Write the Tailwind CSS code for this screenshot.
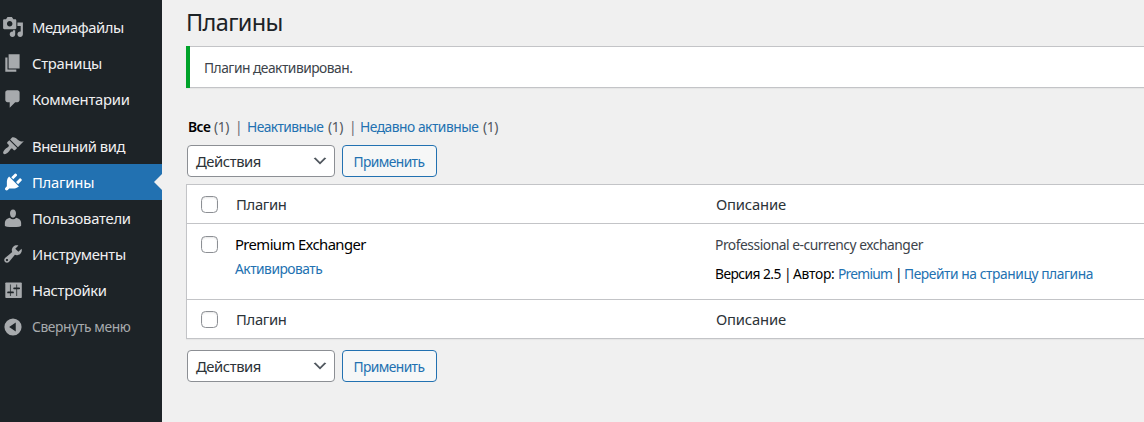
<!DOCTYPE html>
<html lang="ru">
<head>
<meta charset="utf-8">
<title>Плагины</title>
<script src="https://cdn.jsdelivr.net/npm/@tailwindcss/browser@4"></script>
</head>
<body class="flex h-[422px] w-[1144px] overflow-hidden bg-[#f0f0f0] font-['Noto_Sans','Open_Sans',sans-serif] text-[13.8px] text-[#3c434a] whitespace-nowrap">
<nav class="flex w-[162px] shrink-0 flex-col bg-[#1d2327] pt-[9px] text-[14.8px] text-[#f0f0f1]">
  <a class="flex h-9 items-center pl-0.5"><svg class="mr-2 size-[22px] fill-[#a7aaad]" viewBox="0 0 20 20"><path fill-rule="evenodd" d="M13 11V4c0-.55-.45-1-1-1h-1.670L9 1H5L3.670 3H2c-.55 0-1 .45-1 1v7c0 .55.45 1 1 1h10c.55 0 1-.45 1-1zM7 4.500c1.380 0 2.500 1.120 2.500 2.500S8.380 9.500 7 9.500 4.500 8.380 4.500 7 5.620 4.500 7 4.500zM14 6h5v10.500c0 1.380-1.120 2.500-2.500 2.500S14 17.880 14 16.500s1.120-2.500 2.500-2.500c.17 0 .34.020.5.050V9h-3V6zm-4 8.050V13h2v3.500c0 1.380-1.120 2.500-2.500 2.500S7 17.880 7 16.500 8.120 14 9.500 14c.17 0 .34.020.5.050z"/></svg><span class="tracking-[-0.43px]">Медиафайлы</span></a>
  <a class="flex h-9 items-center pl-0.5"><svg class="mr-2 size-[22px] fill-[#a7aaad]" viewBox="0 0 20 20"><path d="M6 15V2h10v13H6zm-1 1h8v2H3V5h2v11z"/></svg><span class="tracking-[-0.27px]">Страницы</span></a>
  <a class="flex h-9 items-center pl-0.5"><svg class="mr-2 size-[22px] fill-[#a7aaad]" viewBox="0 0 20 20"><path d="M5 2h9c1.100 0 2 .9 2 2v7c0 1.100-.9 2-2 2h-2l-5 5v-5H5c-1.100 0-2-.9-2-2V4c0-1.100.9-2 2-2z"/></svg><span class="tracking-[-0.22px]">Комментарии</span></a>
  <a class="mt-[11px] flex h-9 items-center pl-0.5"><svg class="mr-2 size-[22px] fill-[#a7aaad]" viewBox="0 0 20 20"><path d="M14.480 11.060L7.410 3.990l1.500-1.500c.5-.56 2.300-.47 3.510.32 1.210.8 1.430 1.280 2.910 2.100 1.180.64 2.450 1.260 4.450.85zm-.71.71L6.700 4.700 4.930 6.470c-.39.39-.39 1.020 0 1.410l1.060 1.060c.39.39.39 1.030 0 1.420-.6.6-1.430 1.110-2.210 1.690-.35.26-.7.53-1.010.84C1.430 14.230.4 16.080 1.400 17.070c.99 1 2.840-.03 4.180-1.360.31-.31.58-.66.85-1.020.57-.78 1.080-1.610 1.690-2.210.39-.39 1.020-.39 1.410 0l1.060 1.060c.39.39 1.020.39 1.410 0z"/></svg><span class="tracking-[-0.45px]">Внешний вид</span></a>
  <a class="relative flex h-9 items-center bg-[#2271b1] pl-0.5 text-white"><svg class="mr-2 size-[22px] fill-white" viewBox="-0.4 0 20 20"><path d="M13.110 4.360L9.870 7.600 8 5.730l3.240-3.240c.35-.34 1.050-.2 1.560.32.52.51.66 1.210.31 1.550zm-8 1.770l.91-1.120 9.010 9.010-1.190.84c-.71.71-2.630 1.160-3.820 1.160H6.140L4.900 17.260c-.59.59-1.540.59-2.120 0-.59-.58-.59-1.530 0-2.120l1.240-1.240v-3.880c0-1.130.4-3.190 1.090-3.890zm7.260 3.970l3.240-3.240c.34-.35 1.040-.21 1.550.31.52.51.66 1.210.31 1.550l-3.240 3.250z"/></svg><span class="tracking-[-0.23px]">Плагины</span><svg class="absolute top-2.5 right-0 h-4 w-2 fill-[#f0f0f0]" viewBox="0 0 8 16"><path d="M8 0v16L0 8z"/></svg></a>
  <a class="flex h-9 items-center pl-0.5"><svg class="mr-2 size-[22px] fill-[#a7aaad]" viewBox="0 0 20 20"><path d="M10 9.700C8 9.700 7.350 7.200 7.300 5.900 7.200 3.900 8.200 2.300 10 2.300s2.800 1.600 2.700 3.600C12.650 7.200 12 9.700 10 9.700zM7.100 9.700Q8.400 11.100 10 11.100T12.900 9.700C15.500 10.200 17.400 12.100 17.400 14.400v2.700Q17.300 18.200 10 18.200T2.600 17.100v-2.700C2.600 12.100 4.500 10.200 7.100 9.700z"/></svg><span class="tracking-[-0.23px]">Пользователи</span></a>
  <a class="flex h-9 items-center pl-0.5"><svg class="mr-2 size-[22px] fill-[#a7aaad]" viewBox="0 0 20 20"><path fill-rule="evenodd" d="M16.680 9.770c-1.340 1.340-3.300 1.670-4.950.99l-5.410 6.520c-.99.99-2.590.99-3.580 0s-.99-2.590 0-3.570l6.520-5.420c-.68-1.650-.35-3.610.99-4.950 1.280-1.280 3.120-1.620 4.720-1.060l-2.890 2.890 2.820 2.820 2.860-2.870c.53 1.580.18 3.390-1.080 4.650zM3.810 16.210c.4.39 1.040.39 1.430 0 .4-.4.4-1.040 0-1.430-.39-.4-1.030-.4-1.430 0-.39.39-.39 1.030 0 1.430z"/></svg><span class="tracking-[-0.31px]">Инструменты</span></a>
  <a class="flex h-9 items-center pl-0.5"><svg class="mr-2 size-[22px] fill-[#a7aaad]" viewBox="0 0 20 20"><rect x="3" y="3.200" width="15" height="14" rx=".7"/><path d="M7.700 5v10.500M13.300 5v10.500" fill="none" stroke="#1d2327" stroke-opacity=".7" stroke-width="1"/><path d="M5.500 12.200h4.500M11 8.500h4.600" fill="none" stroke="#1d2327" stroke-width="1.600" stroke-linecap="round"/></svg><span class="tracking-[-0.3px]">Настройки</span></a>
  <a class="mt-px flex h-9 items-center pl-0.5 text-[13.8px] text-[#a7aaad]"><svg class="mr-2 size-[22px] fill-[#a7aaad]" viewBox="0 0 20 20"><path fill-rule="evenodd" d="M10 2.200a7.800 7.800 0 1 0 0 15.600 7.800 7.800 0 0 0 0-15.600zM12.500 6v8L6.500 10z"/></svg><span class="tracking-[-0.37px]">Свернуть меню</span></a>
</nav>
<main class="flex min-w-0 flex-1 flex-col pl-6">
  <h1 class="h-[46px] pt-[7px] text-[23.5px] leading-[30px] tracking-[-0.63px] text-[#1d2327]">Плагины</h1>
  <div class="flex h-[42px] shrink-0 border-y border-[#c3c4c7] bg-white shadow-[0_1px_1px_rgba(0,0,0,0.04)]"><div class="-my-px w-1 bg-[#00a32a]"></div><p class="self-center pl-3.5 pt-0.5 tracking-[-0.51px]">Плагин деактивирован.</p></div>
  <div class="mt-[29px] flex h-5 items-center pl-0.5 leading-5 text-[#50575e]">
    <b class="w-[26px] font-semibold tracking-[-0.5px] text-black">Все</b><span class="w-[21px] tracking-[-0.4px]">(1)</span><span class="w-3 text-[#646970]">|</span><a class="w-[81px] tracking-[-0.6px] text-[#2271b1]">Неактивные</a><span class="w-[21px] tracking-[-0.4px]">(1)</span><span class="w-[11px] text-[#646970]">|</span><a class="w-[123px] tracking-[-0.49px] text-[#2271b1]">Недавно активные</a><span class="tracking-[-0.4px]">(1)</span>
  </div>
  <div class="mt-2 flex h-8 gap-[7px] pl-px">
    <div class="flex w-[148px] items-center justify-between rounded-[4px] border border-[#8c8f94] bg-white pr-[5px] pl-2 text-[14.8px] tracking-[-0.43px] text-[#2c3338]"><span>Действия</span><svg class="size-[18px] fill-[#50575e]" viewBox="0 0 20 20"><path d="M5 6l5 5 5-5 2 1-7 7-7-7 2-1z"/></svg></div>
    <div class="flex w-[95px] items-center rounded-[4px] border border-[#2271b1] bg-[#f6f7f7] pt-[3px] pl-[10.5px] tracking-[-0.6px] text-[#2271b1]">Применить</div>
  </div>
  <div class="mt-[7px] flex h-[155px] flex-col border-y border-l border-[#c3c4c7] bg-white shadow-[0_1px_1px_rgba(0,0,0,0.04)]">
    <div class="flex h-[39px] items-center border-b border-[#c3c4c7] pl-3.5 text-[14.8px] text-[#2c3338]"><i class="mr-[18px] size-[17px] rounded-[4.5px] border border-[#8c8f94] shadow-[inset_0_1px_2px_rgba(0,0,0,0.1)]"></i><span class="w-[480px] tracking-[-0.32px]">Плагин</span><span class="tracking-[-0.19px]">Описание</span></div>
    <div class="flex h-[76px] border-b border-[#c3c4c7] pl-3.5"><i class="mt-3 mr-[17px] size-[17px] rounded-[4.5px] border border-[#8c8f94] shadow-[inset_0_1px_2px_rgba(0,0,0,0.1)]"></i>
      <div class="w-[480px] pt-2.5"><div class="text-[14.8px] leading-5 tracking-[-0.58px] text-black">Premium Exchanger</div><a class="mt-[5px] block leading-5 tracking-[-0.5px] text-[#2271b1]">Активировать</a></div>
      <div class="pt-[11px] leading-5"><p class="tracking-[-0.46px]">Professional e-currency exchanger</p><div class="mt-[9px] flex text-black"><span class="w-[69px] tracking-[-0.55px]">Версия 2.5</span><span class="w-[9px]">|</span><span class="w-[45px] tracking-[-0.24px]">Автор:</span><a class="w-[57px] tracking-[-0.76px] text-[#2271b1]">Premium</a><span class="w-[9px]">|</span><a class="tracking-[-0.44px] text-[#2271b1]">Перейти на страницу плагина</a></div></div>
    </div>
    <div class="flex h-[38px] items-center pl-3.5 text-[14.8px] text-[#2c3338]"><i class="mr-[18px] size-[17px] rounded-[4.5px] border border-[#8c8f94] shadow-[inset_0_1px_2px_rgba(0,0,0,0.1)]"></i><span class="w-[480px] tracking-[-0.32px]">Плагин</span><span class="tracking-[-0.19px]">Описание</span></div>
  </div>
  <div class="mt-[11px] flex h-8 gap-[7px] pl-px">
    <div class="flex w-[148px] items-center justify-between rounded-[4px] border border-[#8c8f94] bg-white pr-[5px] pl-2 text-[14.8px] tracking-[-0.43px] text-[#2c3338]"><span>Действия</span><svg class="size-[18px] fill-[#50575e]" viewBox="0 0 20 20"><path d="M5 6l5 5 5-5 2 1-7 7-7-7 2-1z"/></svg></div>
    <div class="flex w-[95px] items-center rounded-[4px] border border-[#2271b1] bg-[#f6f7f7] pt-[3px] pl-[10.5px] tracking-[-0.6px] text-[#2271b1]">Применить</div>
  </div>
</main>
</body>
</html>
